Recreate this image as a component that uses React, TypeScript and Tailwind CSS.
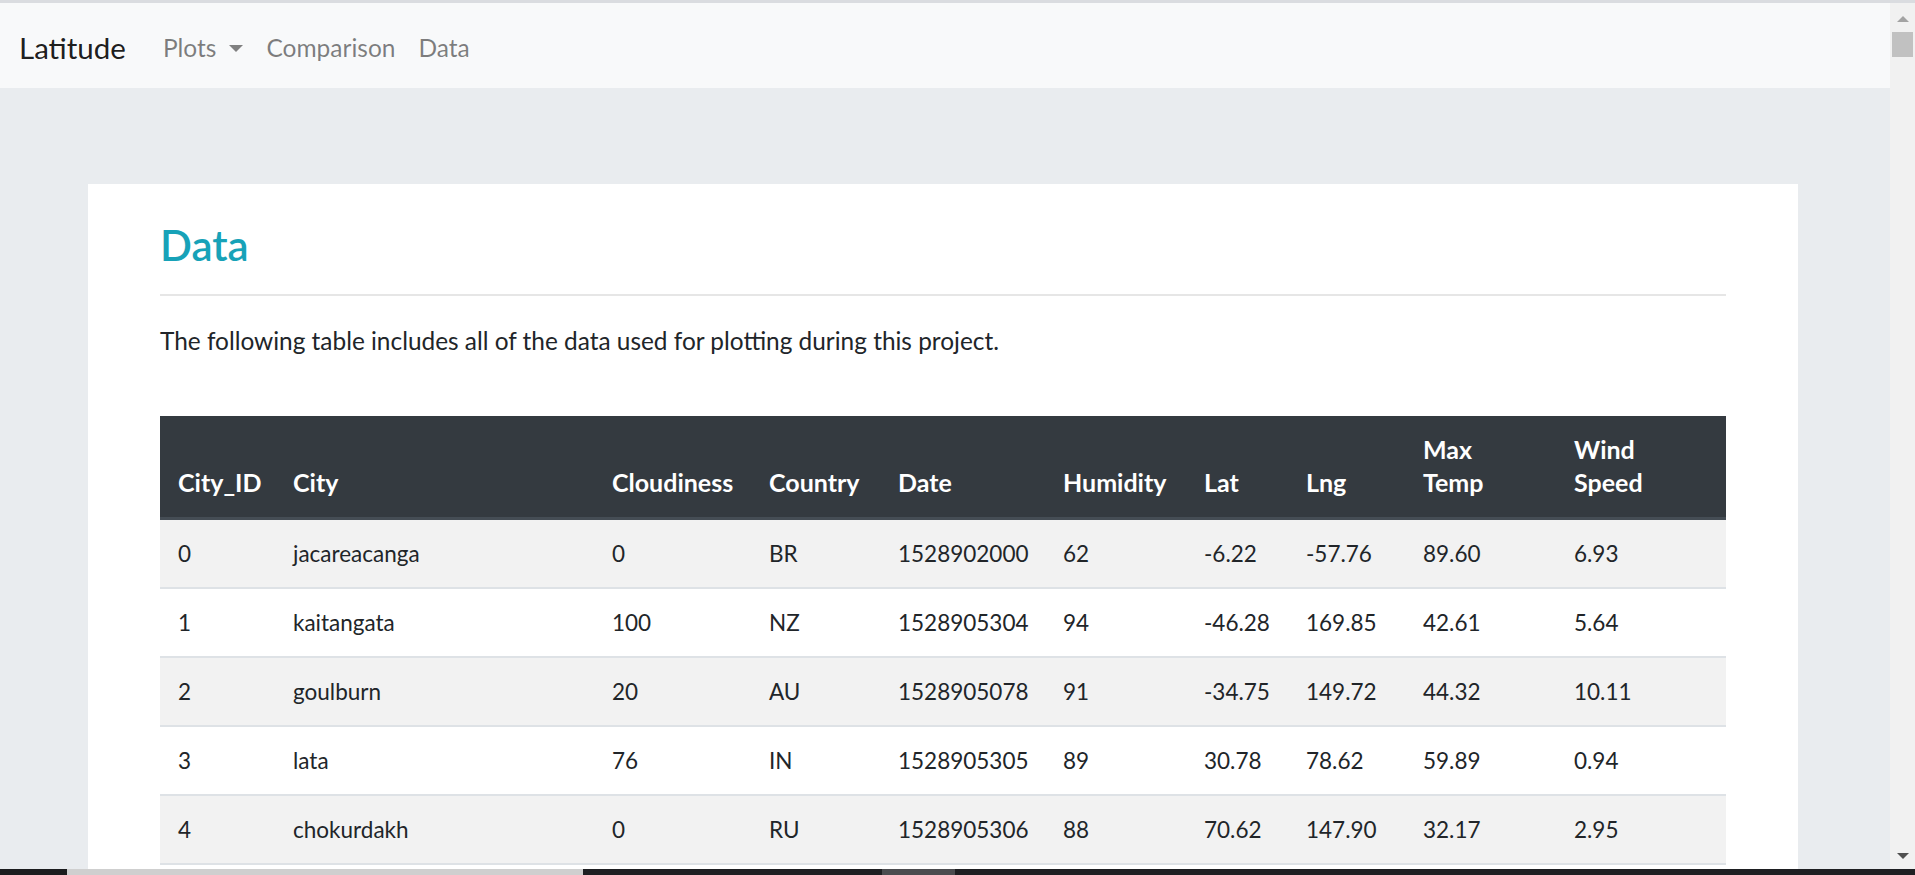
import React from 'react';

interface CityRow {
  id: number;
  city: string;
  cloudiness: number;
  country: string;
  date: number;
  humidity: number;
  lat: string;
  lng: string;
  maxTemp: string;
  wind: string;
}

const rows: CityRow[] = [
  { id: 0, city: 'jacareacanga', cloudiness: 0, country: 'BR', date: 1528902000, humidity: 62, lat: '-6.22', lng: '-57.76', maxTemp: '89.60', wind: '6.93' },
  { id: 1, city: 'kaitangata', cloudiness: 100, country: 'NZ', date: 1528905304, humidity: 94, lat: '-46.28', lng: '169.85', maxTemp: '42.61', wind: '5.64' },
  { id: 2, city: 'goulburn', cloudiness: 20, country: 'AU', date: 1528905078, humidity: 91, lat: '-34.75', lng: '149.72', maxTemp: '44.32', wind: '10.11' },
  { id: 3, city: 'lata', cloudiness: 76, country: 'IN', date: 1528905305, humidity: 89, lat: '30.78', lng: '78.62', maxTemp: '59.89', wind: '0.94' },
  { id: 4, city: 'chokurdakh', cloudiness: 0, country: 'RU', date: 1528905306, humidity: 88, lat: '70.62', lng: '147.90', maxTemp: '32.17', wind: '2.95' },
];

const colWidths = [115, 319, 157, 129, 165, 141, 102, 117, 151, 170];

const headers: React.ReactNode[] = [
  'City_ID',
  'City',
  'Cloudiness',
  'Country',
  'Date',
  'Humidity',
  'Lat',
  'Lng',
  <>Max<br />Temp</>,
  <>Wind<br />Speed</>,
];

const App = () => {
  return (
    <div
      className="w-[1915px] h-[875px] overflow-hidden flex flex-col bg-[#e9ecef] text-[#212529]"
      style={{ fontFamily: 'Lato, "Noto Sans", sans-serif' }}
    >
      <div className="h-[3px] bg-[#dadce0] shrink-0" />

      <div className="flex flex-1 min-h-0">
        <div className="flex-1 min-w-0 flex flex-col">
          {/* navbar */}
          <nav className="h-[85px] shrink-0 bg-[#f8f9fa] flex items-center pl-[19px] pt-[5px]">
            <span className="text-[29.5px] text-black/90 mr-[37px]">Latitude</span>
            <div className="flex items-center gap-[23px] text-[24.5px] text-black/50">
              <span className="flex items-center">
                Plots
                <span className="ml-[13px] w-0 h-0 border-l-[7px] border-r-[7px] border-t-[7px] border-l-transparent border-r-transparent border-t-[#808080]" />
              </span>
              <span>Comparison</span>
              <span>Data</span>
            </div>
          </nav>

          {/* page */}
          <main className="flex-1 min-h-0 overflow-hidden pt-[96px] pl-[88px] pr-[92px]">
            <div className="bg-white px-[72px] pt-[31px] h-full">
              <h1 className="text-[42px] font-semibold leading-[60px] text-[#17a2b8]">Data</h1>
              <hr className="mt-[19px] border-t-2 border-[#e6e6e6]" />
              <p className="mt-[28px] text-[24.4px] leading-[34px]">
                The following table includes all of the data used for plotting during this project.
              </p>

              <table className="mt-[58px] w-full table-fixed border-collapse text-[22.5px] text-left">
                <colgroup>
                  {colWidths.map((w, i) => (
                    <col key={i} style={{ width: w }} />
                  ))}
                </colgroup>
                <thead>
                  <tr className="bg-[#343a40] text-white">
                    {headers.map((h, i) => (
                      <th
                        key={i}
                        className="align-bottom text-[25px] font-bold leading-[33px] pt-[17px] pb-[18px] px-[18px] border-b-[3px] border-[#454d55]"
                      >
                        {h}
                      </th>
                    ))}
                  </tr>
                </thead>
                <tbody>
                  {rows.map((r, i) => (
                    <tr key={r.id} className={i % 2 === 0 ? 'bg-[#f2f2f2]' : 'bg-white'}>
                      {[r.id, r.city, r.cloudiness, r.country, r.date, r.humidity, r.lat, r.lng, r.maxTemp, r.wind].map(
                        (v, j) => (
                          <td
                            key={j}
                            className="px-[18px] py-[17px] leading-[33px] border-t-2 border-[#dee2e6]"
                          >
                            {v}
                          </td>
                        )
                      )}
                    </tr>
                  ))}
                  <tr>
                    <td colSpan={10} className="border-t-2 border-[#dee2e6] h-[20px]" />
                  </tr>
                </tbody>
              </table>
            </div>
          </main>
        </div>

        {/* scrollbar */}
        <div className="w-[25px] shrink-0 bg-[#f1f1f1] flex flex-col items-center">
          <div className="mt-[13px] w-0 h-0 border-l-[6px] border-r-[6px] border-b-[6px] border-l-transparent border-r-transparent border-b-[#a3a3a3]" />
          <div className="mt-[10px] w-[21px] h-[25px] bg-[#c1c1c1]" />
          <div className="flex-1" />
          <div className="mb-[10px] w-0 h-0 border-l-[6px] border-r-[6px] border-t-[6px] border-l-transparent border-r-transparent border-t-[#505050]" />
        </div>
      </div>

      {/* bottom strip */}
      <div className="h-[6px] shrink-0 flex">
        <div className="w-[67px] bg-[#1b1c1e]" />
        <div className="w-[516px] bg-[#cfcfcf]" />
        <div className="w-[299px] bg-[#1e1f22]" />
        <div className="w-[73px] bg-[#4b4c4f]" />
        <div className="flex-1 bg-[#1e1f22]" />
      </div>
    </div>
  );
};

export default App;
